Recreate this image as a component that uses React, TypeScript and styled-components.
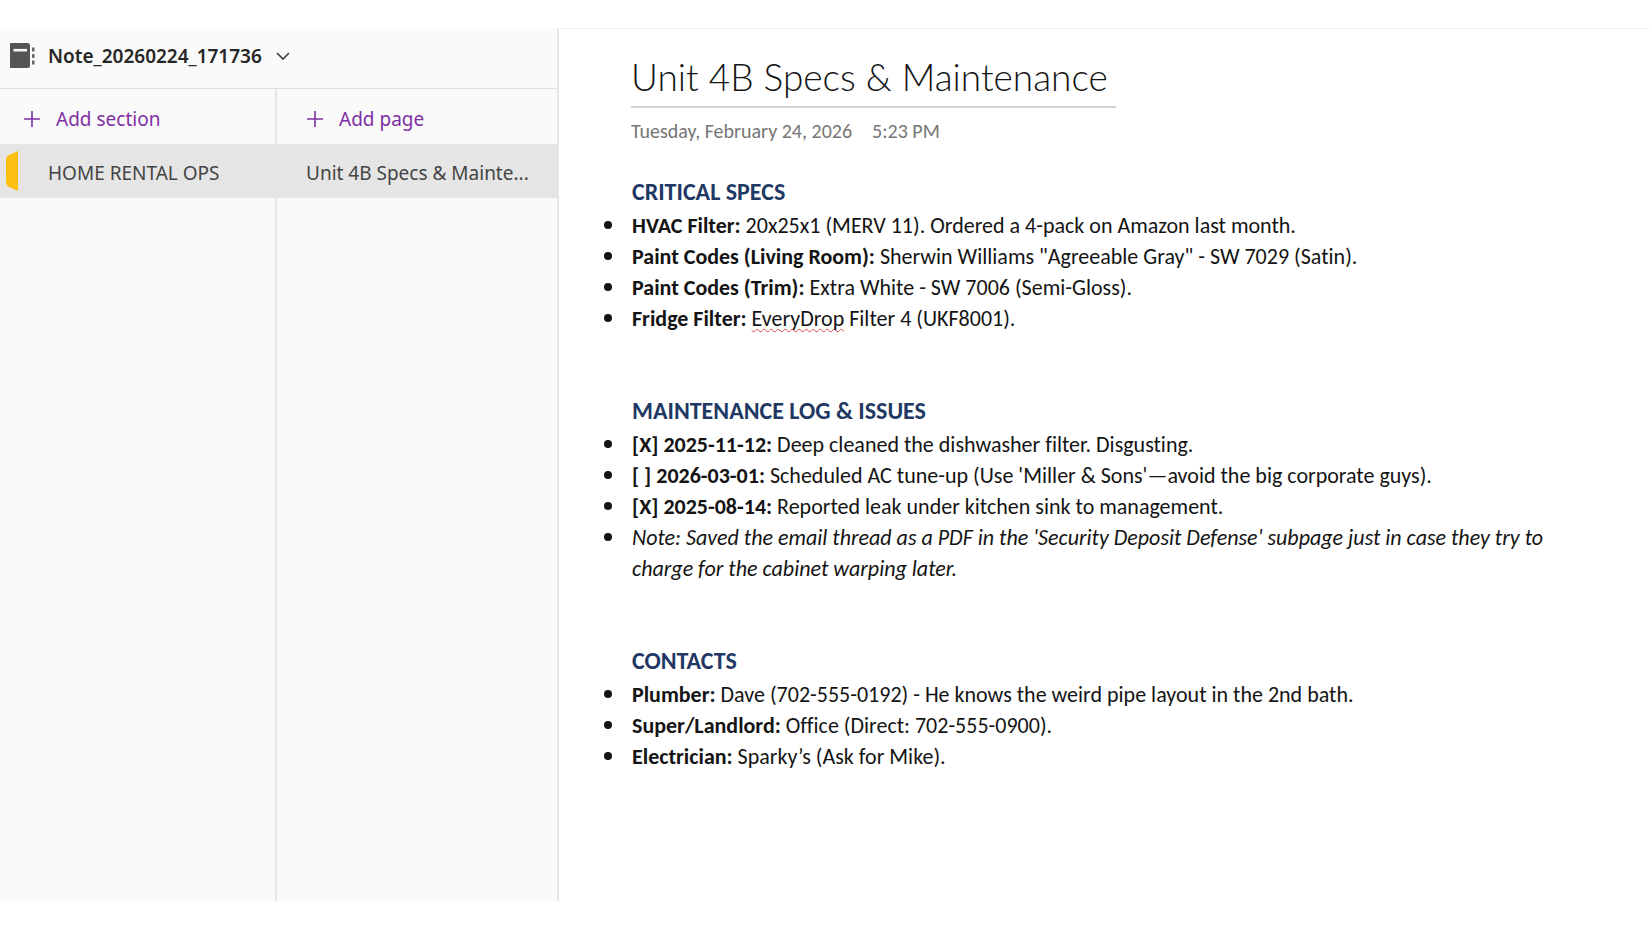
import React from 'react';
import styled, { createGlobalStyle } from 'styled-components';

const uiFont = '"Noto Sans", "Open Sans", sans-serif';
const noteFont = 'Carlito, Lato, "Open Sans", sans-serif';

const GlobalStyle = createGlobalStyle`
  *, *::before, *::after { box-sizing: border-box; }
  body { margin: 0; background: #ffffff; }
  button { font: inherit; color: inherit; background: none; border: 0; padding: 0; text-align: left; cursor: pointer; }
  h1, h2, ul, p { margin: 0; padding: 0; }
`;

const Window = styled.div`
  display: flex;
  min-height: 100vh;
  padding: 28px 0 27px;
`;

const Sidebar = styled.aside`
  display: flex;
  flex-direction: column;
  flex: 0 0 559px;
  min-width: 0;
  background: #fafafa;
  border-right: 2px solid #e6e6e6;
  font-family: ${uiFont};
  font-size: 19px;
  line-height: 26px;
`;

const NotebookButton = styled.button`
  display: flex;
  align-items: center;
  height: 61px;
  padding: 0 10px 5px;
  border-bottom: 1px solid #e0e0e0;
  color: #262626;
`;

const NotebookName = styled.span`
  margin: 0 13px;
  font-weight: 600;
`;

const Columns = styled.div`
  display: flex;
  flex: 1;
`;

const Column = styled.nav<{ $width: string; $divider?: boolean }>`
  flex: ${(p) => p.$width};
  min-width: 0;
  border-right: ${(p) => (p.$divider ? '2px solid #e6e6e6' : '0')};
`;

const AddButton = styled.button<{ $inset: number }>`
  display: flex;
  align-items: center;
  gap: 15px;
  width: 100%;
  height: 55px;
  padding: 5px 0 0 ${(p) => p.$inset}px;
  color: #7f2fa3;
`;

const Entry = styled.button<{ $inset: number }>`
  position: relative;
  display: flex;
  align-items: center;
  width: 100%;
  height: 54px;
  padding: 4px 24px 0 ${(p) => p.$inset}px;
  background: #e5e5e5;
  color: #444444;
`;

const EntryLabel = styled.span`
  min-width: 0;
  white-space: nowrap;
`;

const SectionTab = styled.svg`
  position: absolute;
  left: 6px;
  top: 7px;
`;

const Page = styled.main`
  flex: 1;
  min-width: 0;
  padding: 25px 72px 40px;
  border-top: 1px solid #f3f3f3;
  font-family: ${noteFont};
  font-size: 22px;
  font-variant-ligatures: none;
  line-height: 31px;
  color: #141414;
`;

const Title = styled.h1`
  width: fit-content;
  padding: 0 8px 6px 0;
  border-bottom: 2px solid #d2d2d2;
  font-family: Lato, "Open Sans", sans-serif;
  font-size: 37px;
  font-weight: 300;
  line-height: 46px;
`;

const Stamp = styled.p`
  display: flex;
  gap: 20px;
  margin: 10px 0 32px;
  font-size: 20px;
  line-height: 26px;
  color: #767676;
`;

const Block = styled.section`
  padding-left: 1px;
  & + & { margin-top: 61px; }
`;

const Heading = styled.h2`
  padding-bottom: 2px;
  font-size: 24px;
  font-weight: 700;
  line-height: 32px;
  color: #1f3864;
`;

const List = styled.ul`
  list-style: none;
`;

const Item = styled.li<{ $italic?: boolean }>`
  position: relative;
  font-style: ${(p) => (p.$italic ? 'italic' : 'normal')};
  &::before {
    content: '';
    position: absolute;
    left: -28px;
    top: 11px;
    width: 8px;
    height: 8px;
    border-radius: 50%;
    background: #141414;
  }
`;

const Misspelled = styled.span`
  text-decoration: underline wavy #e0474c 1px;
  text-underline-offset: 2px;
  text-decoration-skip-ink: none;
`;

const NotebookIcon = () => (
  <svg width="25" height="26" viewBox="0 0 25 26" aria-hidden="true">
    <path d="M1 0H17.500Q20 0 20 2.500V22.500Q20 25 17.500 25H1Q0 25 0 24V1Q0 0 1 0Z" fill="#555555" />
    <path d="M3.500 7.200H17" stroke="#fafafa" strokeWidth="2.600" />
    <path d="M22 4.500H24.500V8.500H22ZM22 11H24.500V15H22ZM22 17.500H24.500V21.500H22Z" fill="#666666" />
  </svg>
);

const Chevron = () => (
  <svg width="16" height="10" viewBox="0 0 16 10" fill="none" aria-hidden="true">
    <path d="M2 2L8 8L14 2" stroke="#444444" strokeWidth="1.700" />
  </svg>
);

const Plus = () => (
  <svg width="18" height="18" viewBox="0 0 18 18" fill="none" aria-hidden="true">
    <path d="M9 1V17M1 9H17" stroke="#7f2fa3" strokeWidth="1.600" />
  </svg>
);

export default function App() {
  return (
    <>
      <GlobalStyle />
      <Window>
        <Sidebar>
          <NotebookButton>
            <NotebookIcon />
            <NotebookName>Note_20260224_171736</NotebookName>
            <Chevron />
          </NotebookButton>
          <Columns>
            <Column $width="0 0 277px" $divider aria-label="Sections">
              <AddButton $inset={23}><Plus />Add section</AddButton>
              <Entry $inset={48}>
                <SectionTab width="12" height="40" viewBox="0 0 12 40" aria-hidden="true">
                  <path d="M12 0V40L3 36Q0 34.500 0 31V9Q0 5.500 3 4Z" fill="#fdc010" />
                </SectionTab>
                <EntryLabel>HOME RENTAL OPS</EntryLabel>
              </Entry>
            </Column>
            <Column $width="1 1 0" aria-label="Pages">
              <AddButton $inset={29}><Plus />Add page</AddButton>
              <Entry $inset={29}>
                <EntryLabel>Unit 4B Specs &amp; Mainte...</EntryLabel>
              </Entry>
            </Column>
          </Columns>
        </Sidebar>
        <Page>
          <Title>Unit 4B Specs &amp; Maintenance</Title>
          <Stamp><span>Tuesday, February 24, 2026</span><span>5:23 PM</span></Stamp>
          <Block>
            <Heading>CRITICAL SPECS</Heading>
            <List>
              <Item><b>HVAC Filter:</b> 20x25x1 (MERV 11). Ordered a 4-pack on Amazon last month.</Item>
              <Item><b>Paint Codes (Living Room):</b> Sherwin Williams "Agreeable Gray" - SW 7029 (Satin).</Item>
              <Item><b>Paint Codes (Trim):</b> Extra White - SW 7006 (Semi-Gloss).</Item>
              <Item><b>Fridge Filter:</b> <Misspelled>EveryDrop</Misspelled> Filter 4 (UKF8001).</Item>
            </List>
          </Block>
          <Block>
            <Heading>MAINTENANCE LOG &amp; ISSUES</Heading>
            <List>
              <Item><b>[X] 2025-11-12:</b> Deep cleaned the dishwasher filter. Disgusting.</Item>
              <Item><b>[ ] 2026-03-01:</b> Scheduled AC tune-up (Use 'Miller &amp; Sons'—avoid the big corporate guys).</Item>
              <Item><b>[X] 2025-08-14:</b> Reported leak under kitchen sink to management.</Item>
              <Item $italic>Note: Saved the email thread as a PDF in the 'Security Deposit Defense' subpage just in case they try to charge for the cabinet warping later.</Item>
            </List>
          </Block>
          <Block>
            <Heading>CONTACTS</Heading>
            <List>
              <Item><b>Plumber:</b> Dave (702-555-0192) - He knows the weird pipe layout in the 2nd bath.</Item>
              <Item><b>Super/Landlord:</b> Office (Direct: 702-555-0900).</Item>
              <Item><b>Electrician:</b> Sparky’s (Ask for Mike).</Item>
            </List>
          </Block>
        </Page>
      </Window>
    </>
  );
}
